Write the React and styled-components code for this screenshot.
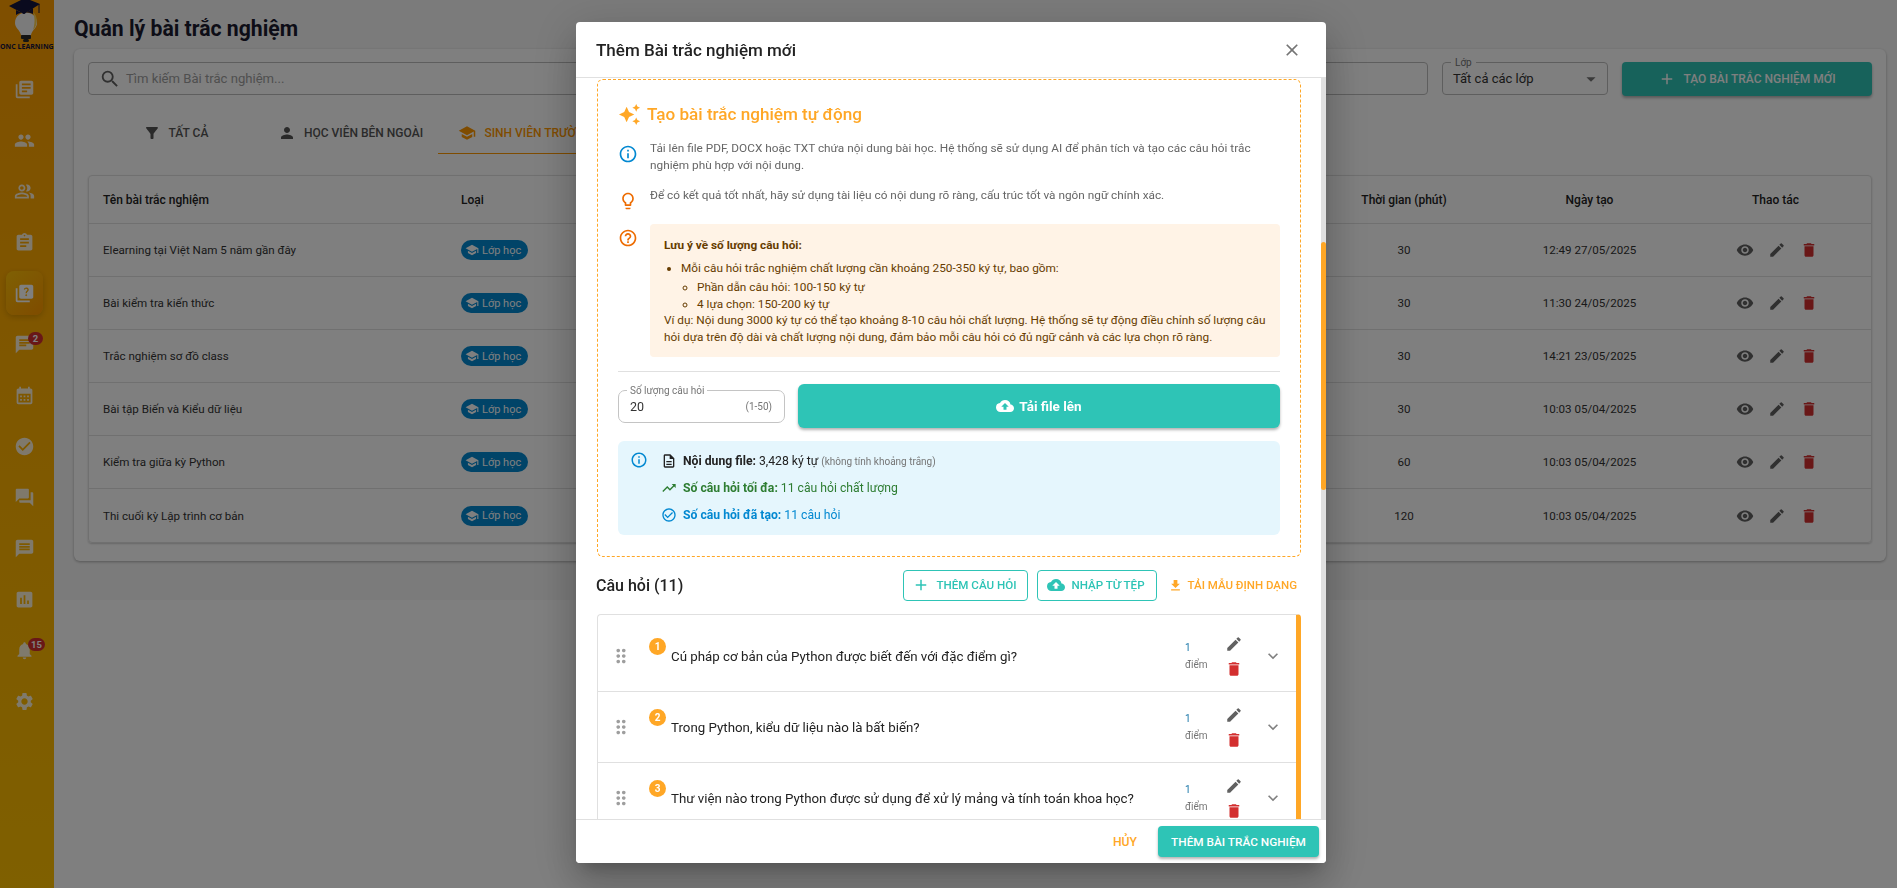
import React from "react";
import styled, { createGlobalStyle } from "styled-components";
import {
  MdLibraryBooks, MdPeople, MdOutlinePeopleAlt, MdAssignment, MdQuiz, MdChat, MdCalendarMonth,
  MdCheckCircle, MdForum, MdMessage, MdAssessment, MdNotifications, MdSettings, MdSearch, MdFilterAlt,
  MdPerson, MdSchool, MdVisibility, MdEdit, MdDelete, MdClose, MdAdd, MdArrowDropDown, MdCloudUpload,
  MdFileDownload, MdAutoAwesome, MdInfoOutline, MdLightbulbOutline, MdHelpOutline, MdOutlineDescription,
  MdTrendingUp, MdCheckCircleOutline, MdDragIndicator, MdExpandMore,
} from "react-icons/md";

const GlobalStyle = createGlobalStyle`
  * { box-sizing: border-box; }
  html, body { margin: 0; padding: 0; height: 100%; overflow: hidden; background: #fff; }
  body { font-family: Roboto, "Open Sans", sans-serif; color: #212121; }
`;

const teal = "#2ec4b6";
const orange = "#ffa726";

const navItems = [
  { icon: MdLibraryBooks },
  { icon: MdPeople },
  { icon: MdOutlinePeopleAlt },
  { icon: MdAssignment },
  { icon: MdQuiz, active: true },
  { icon: MdChat, badge: "2" },
  { icon: MdCalendarMonth },
  { icon: MdCheckCircle },
  { icon: MdForum },
  { icon: MdMessage },
  { icon: MdAssessment },
  { icon: MdNotifications, badge: "15" },
  { icon: MdSettings },
];

const quizzes = [
  { name: "Elearning tại Việt Nam 5 năm gần đây", time: 30, date: "12:49 27/05/2025" },
  { name: "Bài kiểm tra kiến thức", time: 30, date: "11:30 24/05/2025" },
  { name: "Trắc nghiệm sơ đồ class", time: 30, date: "14:21 23/05/2025" },
  { name: "Bài tập Biến và Kiểu dữ liệu", time: 30, date: "10:03 05/04/2025" },
  { name: "Kiểm tra giữa kỳ Python", time: 60, date: "10:03 05/04/2025" },
  { name: "Thi cuối kỳ Lập trình cơ bản", time: 120, date: "10:03 05/04/2025" },
];

const questions = [
  "Cú pháp cơ bản của Python được biết đến với đặc điểm gì?",
  "Trong Python, kiểu dữ liệu nào là bất biến?",
  "Thư viện nào trong Python được sử dụng để xử lý mảng và tính toán khoa học?",
];

function Logo() {
  return (
    <LogoBox>
      <svg width="54" height="43" viewBox="0 0 54 43">
        <path d="M15 23 C15 9 37 9 37 23 C37 28 32 30 31 35 L21 35 C20 30 15 28 15 23 Z" fill="#f6f6f6" />
        <path d="M33 12 C38 16 38 25 33 30 C35 24 35 17 33 12 Z" fill="#ffd24d" />
        <rect x="21" y="35" width="10" height="4" rx="1" fill="#2a2a2a" />
        <rect x="23" y="39" width="6" height="3" rx="1.5" fill="#2a2a2a" />
        <path d="M9 6 L25 -2 L40 4 L24 14 Z" fill="#14143c" />
        <path d="M16 10 L16 15 C21 12 28 12 33 14 L33 8 L24 14 Z" fill="#14143c" />
        <path d="M39 4 L39 13" stroke="#14143c" strokeWidth="1" />
      </svg>
      <LogoText>ONC LEARNING</LogoText>
    </LogoBox>
  );
}

function Sidebar() {
  return (
    <Side>
      <Logo />
      <Nav>
        {navItems.map((item, i) => (
          <NavItem key={i} $active={item.active}>
            <item.icon />
            {item.badge && <NavBadge>{item.badge}</NavBadge>}
          </NavItem>
        ))}
      </Nav>
    </Side>
  );
}

function QuizTable() {
  return (
    <Table>
      <HeadRow>
        <Cell>Tên bài trắc nghiệm</Cell>
        <Cell>Loại</Cell>
        <Cell $center>Thời gian (phút)</Cell>
        <Cell $center>Ngày tạo</Cell>
        <Cell $center>Thao tác</Cell>
      </HeadRow>
      {quizzes.map((q) => (
        <BodyRow key={q.name}>
          <Cell>{q.name}</Cell>
          <Cell>
            <TypeChip>
              <MdSchool />
              Lớp học
            </TypeChip>
          </Cell>
          <Cell $center>{q.time}</Cell>
          <Cell $center>{q.date}</Cell>
          <Actions>
            <MdVisibility />
            <MdEdit />
            <MdDelete color="#d32f2f" />
          </Actions>
        </BodyRow>
      ))}
    </Table>
  );
}

function Page() {
  return (
    <Main>
      <PageTitle>Quản lý bài trắc nghiệm</PageTitle>
      <Card>
        <Toolbar>
          <SearchBox>
            <MdSearch />
            <span>Tìm kiếm Bài trắc nghiệm...</span>
          </SearchBox>
          <SelectBox>
            <SelectLabel>Lớp</SelectLabel>
            <span>Tất cả các lớp</span>
            <MdArrowDropDown />
          </SelectBox>
          <CreateButton>
            <MdAdd />
            TẠO BÀI TRẮC NGHIỆM MỚI
          </CreateButton>
        </Toolbar>
        <Tabs>
          <Tab>
            <MdFilterAlt />
            TẤT CẢ
          </Tab>
          <Tab>
            <MdPerson />
            HỌC VIÊN BÊN NGOÀI
          </Tab>
          <Tab $active>
            <MdSchool />
            SINH VIÊN TRƯỜNG
          </Tab>
        </Tabs>
        <QuizTable />
      </Card>
    </Main>
  );
}

function AutoPanel() {
  return (
    <DashedBox>
      <AutoTitle>
        <MdAutoAwesome />
        Tạo bài trắc nghiệm tự động
      </AutoTitle>
      <HintRow>
        <MdInfoOutline color="#0288d1" />
        <HintText>
          Tải lên file PDF, DOCX hoặc TXT chứa nội dung bài học. Hệ thống sẽ sử dụng AI để phân tích và tạo các câu hỏi trắc
          nghiệm phù hợp với nội dung.
        </HintText>
      </HintRow>
      <HintRow $gap={14}>
        <MdLightbulbOutline color="#ed6c02" />
        <HintText>Để có kết quả tốt nhất, hãy sử dụng tài liệu có nội dung rõ ràng, cấu trúc tốt và ngôn ngữ chính xác.</HintText>
      </HintRow>
      <HintRow $gap={13}>
        <MdHelpOutline color="#ed6c02" />
        <Note>
          <strong>Lưu ý về số lượng câu hỏi:</strong>
          <ul>
            <li>
              Mỗi câu hỏi trắc nghiệm chất lượng cần khoảng 250-350 ký tự, bao gồm:
              <ul>
                <li>Phần dẫn câu hỏi: 100-150 ký tự</li>
                <li>4 lựa chọn: 150-200 ký tự</li>
              </ul>
            </li>
          </ul>
          <p>
            Ví dụ: Nội dung 3000 ký tự có thể tạo khoảng 8-10 câu hỏi chất lượng. Hệ thống sẽ tự động điều chỉnh số lượng câu
            hỏi dựa trên độ dài và chất lượng nội dung, đảm bảo mỗi câu hỏi có đủ ngữ cảnh và các lựa chọn rõ ràng.
          </p>
        </Note>
      </HintRow>
      <Divider />
      <UploadRow>
        <CountField>
          <CountLabel>Số lượng câu hỏi</CountLabel>
          <span>20</span>
          <small>(1-50)</small>
        </CountField>
        <UploadButton>
          <MdCloudUpload />
          Tải file lên
        </UploadButton>
      </UploadRow>
      <InfoBox>
        <MdInfoOutline color="#0288d1" />
        <InfoLines>
          <InfoLine>
            <MdOutlineDescription />
            <span>
              <strong>Nội dung file:</strong> 3,428 ký tự <small>(không tính khoảng trắng)</small>
            </span>
          </InfoLine>
          <InfoLine $color="#2e7d32">
            <MdTrendingUp />
            <span>
              <strong>Số câu hỏi tối đa:</strong> 11 câu hỏi chất lượng
            </span>
          </InfoLine>
          <InfoLine $color="#0288d1">
            <MdCheckCircleOutline />
            <span>
              <strong>Số câu hỏi đã tạo:</strong> 11 câu hỏi
            </span>
          </InfoLine>
        </InfoLines>
      </InfoBox>
    </DashedBox>
  );
}

function QuestionList() {
  return (
    <List>
      {questions.map((q, i) => (
        <QuestionRow key={q}>
          <Drag>
            <MdDragIndicator />
          </Drag>
          <NumberDot>{i + 1}</NumberDot>
          <QuestionText>{q}</QuestionText>
          <Points>
            <span>1</span>
            <small>điểm</small>
          </Points>
          <RowTools>
            <MdEdit color="#616161" />
            <MdDelete color="#d32f2f" />
          </RowTools>
          <Chevron>
            <MdExpandMore />
          </Chevron>
        </QuestionRow>
      ))}
    </List>
  );
}

function QuizDialog() {
  return (
    <Backdrop>
      <Dialog>
        <DialogHead>
          <h2>Thêm Bài trắc nghiệm mới</h2>
          <MdClose />
        </DialogHead>
        <DialogBody>
          <AutoPanel />
          <SectionHead>
            <h3>Câu hỏi (11)</h3>
            <SectionActions>
              <OutlineButton $left={8}>
                <MdAdd />
                THÊM CÂU HỎI
              </OutlineButton>
              <OutlineButton $left={9}>
                <MdCloudUpload />
                NHẬP TỪ TỆP
              </OutlineButton>
              <TextButton>
                <MdFileDownload />
                TẢI MẪU ĐỊNH DẠNG
              </TextButton>
            </SectionActions>
          </SectionHead>
          <QuestionList />
          <ScrollTrack>
            <ScrollThumb />
          </ScrollTrack>
        </DialogBody>
        <DialogFoot>
          <CancelButton>HỦY</CancelButton>
          <SubmitButton>THÊM BÀI TRẮC NGHIỆM</SubmitButton>
        </DialogFoot>
      </Dialog>
    </Backdrop>
  );
}

export default function App() {
  return (
    <>
      <GlobalStyle />
      <Shell>
        <Sidebar />
        <Page />
      </Shell>
      <QuizDialog />
    </>
  );
}

const Shell = styled.div`
  display: flex;
  height: 888px;
`;

const Side = styled.aside`
  width: 54px;
  height: 888px;
  flex-shrink: 0;
  background: linear-gradient(180deg, #ff9e00 0%, #ffab00 30%, #ffc000 100%);
  overflow: hidden;
`;

const LogoBox = styled.div`
  height: 67px;
  width: 54px;
  position: relative;

  svg {
    display: block;
  }
`;

const LogoText = styled.div`
  width: 54px;
  font-family: "Open Sans", sans-serif;
  font-size: 7px;
  font-weight: 700;
  line-height: 10px;
  margin-top: -1px;
  white-space: nowrap;
  color: #14143c;
`;

const Nav = styled.nav`
  display: flex;
  flex-direction: column;
  gap: 7px;
  width: 37px;
  margin-left: 6px;
`;

const NavItem = styled.div`
  position: relative;
  height: 44px;
  display: flex;
  align-items: center;
  justify-content: center;
  border-radius: 8px;
  color: #fff;
  background: ${(p) => (p.$active ? "linear-gradient(135deg, #ffc107, #ff9800)" : "none")};
  box-shadow: ${(p) => (p.$active ? "0 2px 6px rgba(0,0,0,.18)" : "none")};

  svg {
    font-size: 21px;
    opacity: ${(p) => (p.$active ? 1 : 0.85)};
  }
`;

const NavBadge = styled.span`
  position: absolute;
  top: 10px;
  left: 22px;
  min-width: 15px;
  height: 13px;
  padding: 0 3px;
  border-radius: 7px;
  background: #d32f2f;
  color: #fff;
  font-size: 9.5px;
  font-weight: 700;
  line-height: 13px;
  text-align: center;
`;

const Main = styled.main`
  flex: 1;
  height: 600px;
  background: #f7f7f7;
  padding: 0 11px 0 20px;
`;

const PageTitle = styled.h1`
  margin: 0;
  height: 49px;
  font-size: 21.2px;
  line-height: 58px;
  font-weight: 700;
  color: #1a1a2e;
`;

const Card = styled.section`
  height: 512px;
  background: #fff;
  border-radius: 6px;
  box-shadow: 0 1px 3px rgba(0, 0, 0, 0.3);
  padding: 13px 14px 0;
`;

const Toolbar = styled.div`
  display: flex;
  gap: 14px;
  height: 34px;
`;

const SearchBox = styled.div`
  flex: 1;
  height: 33px;
  border: 1px solid #bdbdbd;
  border-radius: 4px;
  display: flex;
  align-items: center;
  gap: 5px;
  padding-left: 10px;
  color: #9e9e9e;
  font-size: 13.1px;

  svg {
    font-size: 22px;
    color: #616161;
  }
`;

const SelectBox = styled.div`
  position: relative;
  width: 166px;
  height: 33px;
  border: 1px solid #bdbdbd;
  border-radius: 4px;
  display: flex;
  align-items: center;
  justify-content: space-between;
  padding: 0 5px 0 10px;
  font-size: 13px;
  color: #333;

  svg {
    font-size: 22px;
    color: #757575;
  }
`;

const SelectLabel = styled.span`
  position: absolute;
  top: -6px;
  left: 8px;
  background: #fff;
  padding: 0 4px;
  font-size: 10px;
  line-height: 11px;
  color: #757575;
`;

const CreateButton = styled.button`
  width: 250px;
  height: 34px;
  border: 0;
  border-radius: 4px;
  background: ${teal};
  color: #fff;
  font: inherit;
  font-size: 12px;
  font-weight: 500;
  display: flex;
  align-items: center;
  justify-content: center;
  gap: 7px;
  box-shadow: 0 2px 3px rgba(0, 0, 0, 0.3);

  svg {
    font-size: 18px;
  }
`;

const Tabs = styled.div`
  display: flex;
  height: 44px;
  margin-top: 14px;
`;

const Tab = styled.div`
  width: 175px;
  height: 44px;
  padding-top: 3px;
  border-bottom: 1px solid ${(p) => (p.$active ? "#ff9800" : "transparent")};
  display: flex;
  align-items: center;
  justify-content: center;
  gap: 8px;
  font-size: 12px;
  font-weight: 500;
  white-space: nowrap;
  color: ${(p) => (p.$active ? "#ff9800" : "#555")};

  svg {
    font-size: 18px;
  }
`;

const Table = styled.div`
  margin-top: 21px;
  border: 1px solid #e0e0e0;
  border-radius: 4px;
  box-shadow: 0 1px 2px rgba(0, 0, 0, 0.2);
  font-size: 11.6px;
  color: #333;
`;

const Row = styled.div`
  display: grid;
  grid-template-columns: 358px 1fr 190px 181px 191px;
  align-items: center;
  border-bottom: 1px solid #e0e0e0;
`;

const HeadRow = styled(Row)`
  height: 48px;
  font-size: 12px;
  font-weight: 500;
  color: #222;
`;

const BodyRow = styled(Row)`
  height: 53px;

  &:last-child {
    border-bottom: 0;
  }
`;

const Cell = styled.div`
  padding-left: ${(p) => (p.$center ? "0" : "14px")};
  text-align: ${(p) => (p.$center ? "center" : "left")};
`;

const TypeChip = styled.span`
  display: inline-flex;
  align-items: center;
  gap: 3px;
  height: 20px;
  padding: 0 7px 0 4px;
  border-radius: 10px;
  background: #0288d1;
  color: #fff;
  font-size: 11px;

  svg {
    font-size: 14px;
  }
`;

const Actions = styled.div`
  display: flex;
  justify-content: center;
  gap: 14px;
  color: #616161;
  padding-left: 2px;

  svg {
    font-size: 18px;
  }
`;

const Backdrop = styled.div`
  position: fixed;
  inset: 0;
  background: rgba(0, 0, 0, 0.5);
`;

const Dialog = styled.div`
  position: absolute;
  left: 576px;
  top: 22px;
  width: 750px;
  height: 841px;
  background: #fff;
  border-radius: 4px;
  display: flex;
  flex-direction: column;
  overflow: hidden;
  box-shadow: 0 11px 15px -7px rgba(0, 0, 0, 0.2), 0 24px 38px 3px rgba(0, 0, 0, 0.14), 0 9px 46px 8px rgba(0, 0, 0, 0.12);
`;

const DialogHead = styled.header`
  height: 56px;
  flex-shrink: 0;
  display: flex;
  align-items: center;
  justify-content: space-between;
  padding: 0 24px 0 20px;
  border-bottom: 1px solid #e0e0e0;

  h2 {
    margin: 0;
    font-size: 17px;
    font-weight: 500;
    color: #222;
  }

  svg {
    font-size: 20px;
    color: #757575;
  }
`;

const DialogBody = styled.div`
  position: relative;
  flex: 1;
  overflow: hidden;
  padding: 1px 25px 0 21px;
`;

const ScrollTrack = styled.div`
  position: absolute;
  top: 0;
  right: 0;
  bottom: 0;
  width: 5px;
  background: #e0e0e0;
`;

const ScrollThumb = styled.div`
  margin-top: 164px;
  height: 248px;
  background: ${orange};
  border-radius: 3px;
`;

const DashedBox = styled.div`
  height: 478px;
  border: 1px dashed ${orange};
  border-radius: 6px;
  padding: 20px 20px 0;
`;

const AutoTitle = styled.div`
  display: flex;
  align-items: center;
  gap: 6px;
  height: 28px;
  font-size: 17.1px;
  font-weight: 500;
  color: ${orange};

  svg {
    font-size: 23px;
  }
`;

const HintRow = styled.div`
  display: flex;
  gap: 12px;
  margin-top: ${(p) => p.$gap || 12}px;

  & > svg {
    flex-shrink: 0;
    font-size: 20px;
    margin-top: 4px;
  }
`;

const HintText = styled.p`
  margin: 0;
  font-size: 11.8px;
  line-height: 16.5px;
  color: #666;
`;

const Note = styled.div`
  flex: 1;
  height: 133px;
  background: #fff3e6;
  border-radius: 4px;
  padding: 13px 14px;
  font-size: 11.8px;
  line-height: 16.5px;
  color: #663c00;

  ul {
    margin: 0;
    padding-left: 16px;
  }

  & > ul {
    margin-top: 6px;
    padding-left: 17px;
  }

  li > ul {
    margin-top: 3px;
  }

  p {
    margin: 0;
  }
`;

const Divider = styled.div`
  height: 1px;
  background: #e0e0e0;
  margin-top: 14px;
`;

const UploadRow = styled.div`
  display: flex;
  align-items: center;
  gap: 13px;
  margin-top: 12px;
`;

const CountField = styled.div`
  position: relative;
  width: 167px;
  height: 33px;
  border: 1px solid #c4c4c4;
  border-radius: 7px;
  display: flex;
  align-items: center;
  justify-content: space-between;
  padding: 0 12px 0 11px;
  font-size: 12.5px;
  color: #333;

  small {
    font-size: 10px;
    color: #757575;
  }
`;

const CountLabel = styled.span`
  position: absolute;
  top: -6px;
  left: 8px;
  padding: 0 3px;
  background: #fff;
  font-size: 10px;
  line-height: 11px;
  color: #757575;
`;

const UploadButton = styled.button`
  flex: 1;
  height: 44px;
  border: 0;
  border-radius: 6px;
  background: ${teal};
  color: #fff;
  font: inherit;
  font-size: 13.5px;
  font-weight: 700;
  display: flex;
  align-items: center;
  justify-content: center;
  gap: 5px;
  box-shadow: 0 2px 3px rgba(0, 0, 0, 0.3);

  svg {
    font-size: 18px;
  }
`;

const InfoBox = styled.div`
  display: flex;
  gap: 13px;
  height: 94px;
  margin-top: 13px;
  padding: 10px 12px;
  background: #e5f6fd;
  border-radius: 6px;

  & > svg {
    flex-shrink: 0;
    font-size: 18px;
    margin-top: 0;
  }
`;

const InfoLines = styled.div`
  display: flex;
  flex-direction: column;
  gap: 9px;
  margin-top: 1px;
`;

const InfoLine = styled.div`
  display: flex;
  align-items: center;
  gap: 6px;
  height: 18px;
  font-size: 12.2px;
  color: ${(p) => p.$color || "#222"};

  svg {
    font-size: 16px;
  }

  small {
    font-size: 10px;
    color: #757575;
  }
`;

const SectionHead = styled.div`
  display: flex;
  align-items: center;
  justify-content: space-between;
  height: 32px;
  margin-top: 12px;

  h3 {
    margin: 0;
    font-size: 16px;
    font-weight: 500;
    color: #222;
    margin-left: -1px;
  }
`;

const SectionActions = styled.div`
  display: flex;
  align-items: center;
  gap: 9px;
`;

const OutlineButton = styled.button`
  height: 31px;
  padding: 0 11px 0 ${(p) => p.$left}px;
  border: 1px solid ${teal};
  border-radius: 4px;
  background: #fff;
  color: ${teal};
  font: inherit;
  font-size: 11.6px;
  font-weight: 500;
  display: flex;
  align-items: center;
  gap: 6px;

  svg {
    font-size: 18px;
  }
`;

const TextButton = styled.button`
  border: 0;
  background: none;
  padding: 0 4px 0 2px;
  color: ${orange};
  font: inherit;
  font-size: 11.5px;
  font-weight: 500;
  display: flex;
  align-items: center;
  gap: 5px;

  svg {
    font-size: 15px;
  }
`;

const List = styled.div`
  margin-top: 13px;
  padding-top: 6px;
  border: 1px solid #e0e0e0;
  border-right: 5px solid ${orange};
  border-radius: 4px;
`;

const QuestionRow = styled.div`
  display: flex;
  align-items: center;
  height: 71px;
  border-bottom: 1px solid #e0e0e0;
`;

const Drag = styled.div`
  width: 45px;
  flex-shrink: 0;
  display: flex;
  justify-content: center;
  color: #9e9e9e;

  svg {
    font-size: 22px;
  }
`;

const NumberDot = styled.span`
  flex-shrink: 0;
  width: 17px;
  height: 17px;
  margin: 0 5px 20px 6px;
  border-radius: 50%;
  background: ${orange};
  color: #fff;
  font-size: 10px;
  font-weight: 700;
  line-height: 17px;
  text-align: center;
`;

const QuestionText = styled.div`
  flex: 1;
  font-size: 13.3px;
  color: #222;
`;

const Points = styled.div`
  width: 34px;
  display: flex;
  flex-direction: column;
  gap: 3px;
  font-size: 10px;
  line-height: 14px;
  color: #1976a8;

  small {
    font-size: 10px;
    color: #757575;
  }
`;

const RowTools = styled.div`
  width: 30px;
  display: flex;
  flex-direction: column;
  align-items: center;
  gap: 7px;

  svg {
    font-size: 18px;
  }
`;

const Chevron = styled.div`
  width: 47px;
  display: flex;
  justify-content: center;
  color: #808080;

  svg {
    font-size: 20px;
  }
`;

const DialogFoot = styled.footer`
  position: relative;
  height: 44px;
  flex-shrink: 0;
  display: flex;
  align-items: center;
  justify-content: flex-end;
  gap: 21px;
  padding: 0 7px 0 0;
  background: #fff;
  border-top: 1px solid #e0e0e0;
`;

const CancelButton = styled.button`
  border: 0;
  background: none;
  padding: 0;
  color: ${orange};
  font: inherit;
  font-size: 12.2px;
  font-weight: 500;
`;

const SubmitButton = styled.button`
  width: 161px;
  height: 31px;
  border: 0;
  border-radius: 4px;
  background: ${teal};
  color: #fff;
  font: inherit;
  font-size: 11.8px;
  font-weight: 500;
  white-space: nowrap;
  box-shadow: 0 2px 3px rgba(0, 0, 0, 0.3);
`;
